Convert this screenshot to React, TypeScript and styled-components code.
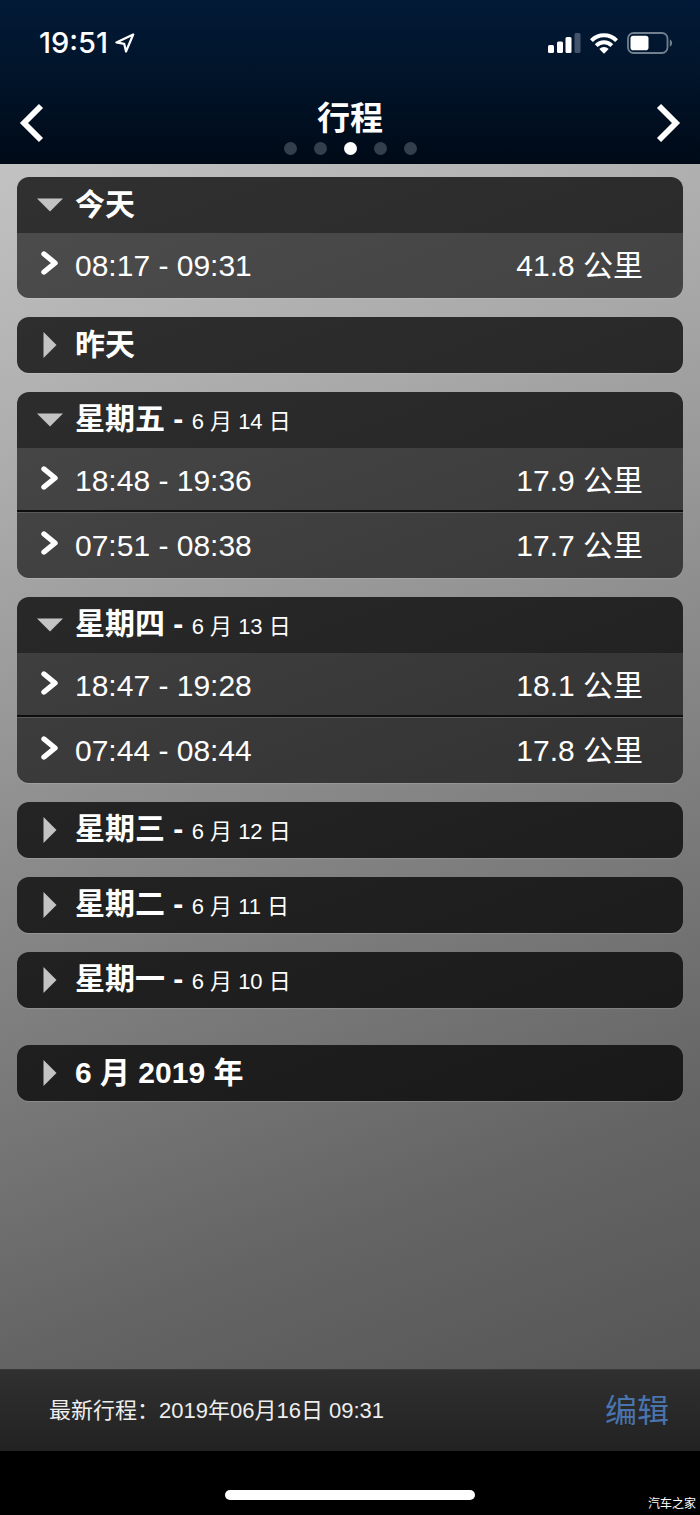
import React, { useState } from "react";
import styled, { createGlobalStyle, css } from "styled-components";

const GlobalStyle = createGlobalStyle`
  *, *::before, *::after { box-sizing: border-box; }
  html, body, #root { min-height: 100vh; }
  body {
    margin: 0;
    background: #000;
    color: #fff;
    font-family: "Liberation Sans", "Noto Sans CJK SC", sans-serif;
  }
  button { font: inherit; color: inherit; border: 0; background: none; padding: 0; cursor: pointer; }
`;

const Screen = styled.div`
  min-height: 100vh;
  display: flex;
  flex-direction: column;
`;

const TopBar = styled.header`
  height: 164px;
  flex: none;
  display: flex;
  flex-direction: column;
  background: linear-gradient(#021a37, #01142a 45%, #000a17);
`;

const StatusBar = styled.div`
  height: 86px;
  padding: 0 27px 0 39px;
  display: flex;
  align-items: center;
  justify-content: space-between;
`;

const Clock = styled.div`
  display: flex;
  align-items: center;
  gap: 7px;
  font: 500 29px/34px Inter, sans-serif;
`;

const StatusIcons = styled.div`
  display: flex;
  align-items: center;
  gap: 9px;
`;

const NavBar = styled.nav`
  flex: 1;
  padding: 0 18px;
  display: flex;
  align-items: flex-start;
  justify-content: space-between;
`;

const NavButton = styled.button`
  height: 74px;
  display: flex;
  align-items: center;
`;

const TitleBlock = styled.div`
  display: flex;
  flex-direction: column;
  align-items: center;
  gap: 3px;
  padding-top: 13px;
`;

const Title = styled.h1`
  margin: 0;
  font-size: 33px;
  line-height: 40px;
  font-weight: 700;
`;

const Dots = styled.div`
  display: flex;
  gap: 17px;
`;

const Dot = styled.span<{ $active?: boolean }>`
  width: 13px;
  height: 13px;
  border-radius: 50%;
  background: ${(p) => (p.$active ? "#fff" : "#343f4d")};
`;

const Trips = styled.main`
  flex: 1;
  padding: 13px 17px 18px;
  display: flex;
  flex-direction: column;
  gap: 19px;
  background: linear-gradient(160deg, #c2c2c2 0%, #a8a8a8 25%, #838383 55%, #646464 82%, #565656 100%);
`;

const Card = styled.section<{ $spaced?: boolean }>`
  flex: none;
  border-radius: 12px;
  overflow: hidden;
  box-shadow: 0 1px 1px rgba(255, 255, 255, 0.15);
  ${(p) => p.$spaced && css`margin-top: 18px;`}
`;

const CardHeading = styled.h2`
  margin: 0;
  font-size: 30px;
  font-weight: 700;
`;

const CardToggle = styled.button`
  width: 100%;
  height: 56px;
  padding-left: 20px;
  display: flex;
  align-items: center;
  background: rgba(0, 0, 0, 0.75);
  text-align: left;
`;

const Marker = styled.span`
  width: 38px;
  flex: none;
  display: flex;
`;

const HeadingText = styled.span`
  line-height: 40px;
  white-space: pre;
`;

const DateText = styled.span`
  font-size: 22px;
  font-weight: 400;
`;

const RowList = styled.ul`
  list-style: none;
  margin: 0;
  padding: 0;
`;

const RowItem = styled.li`
  background: rgba(0, 0, 0, 0.6);
  &:not(:last-child) {
    box-shadow: inset 0 -1px #5a5a5a, inset 0 -3px #0e0e0e;
  }
`;

const TripRow = styled.button`
  width: 100%;
  height: 65px;
  padding: 0 40px 0 20px;
  display: flex;
  align-items: center;
  font-size: 30px;
  line-height: 40px;
`;

const Distance = styled.span`
  margin-left: auto;
`;

const BottomBar = styled.footer`
  height: 82px;
  flex: none;
  padding: 0 31px 0 49px;
  display: flex;
  align-items: center;
  justify-content: space-between;
  background: linear-gradient(#303030, #222);
  border-top: 1px solid #3a3a3a;
`;

const Latest = styled.span`
  font-size: 22px;
  line-height: 32px;
  color: #eee;
`;

const EditButton = styled.button`
  && {
    font-size: 32px;
    line-height: 40px;
    color: #4a74ae;
  }
`;

const HomeArea = styled.div`
  position: relative;
  height: 64px;
  flex: none;
  display: flex;
  justify-content: center;
  align-items: flex-start;
  padding-top: 39px;
`;

const HomeIndicator = styled.div`
  width: 250px;
  height: 10px;
  border-radius: 5px;
  background: #fff;
`;

const Watermark = styled.span`
  position: absolute;
  right: 4px;
  bottom: 2px;
  font-size: 12px;
  line-height: 18px;
`;

const LocationIcon = () => (
  <svg width="20" height="20" viewBox="0 0 20 20" fill="none" stroke="#fff" strokeWidth="2.200" strokeLinejoin="round">
    <path d="M18.200 1.500 1.400 9.400 9.200 10.800 11 18.500Z" />
  </svg>
);

const SignalIcon = () => (
  <svg width="33" height="20" viewBox="0 0 33 20" fill="#fff">
    <rect x="0" y="12" width="6" height="8" rx="1.500" />
    <rect x="9" y="8.500" width="6" height="11.500" rx="1.500" />
    <rect x="17.500" y="4" width="6" height="16" rx="1.500" />
    <rect x="26.500" y="0" width="6" height="20" rx="1.500" fill="#42536a" />
  </svg>
);

const WifiIcon = () => (
  <svg width="28" height="21" viewBox="0 0 28 21">
    <g fill="none" stroke="#fff" strokeWidth="4">
      <path d="M1.400 7.600a17.600 17.600 0 0 1 25.200 0" />
      <path d="M6.200 12.600a11 11 0 0 1 15.600 0" />
    </g>
    <path d="M9.300 16a6.600 6.600 0 0 1 9.400 0L14 20.800Z" fill="#fff" />
  </svg>
);

const BatteryIcon = () => (
  <svg width="46" height="22" viewBox="0 0 46 22">
    <rect x="1" y="1" width="39.500" height="20" rx="5.500" fill="none" stroke="#71808f" strokeWidth="1.800" />
    <rect x="3.500" y="3.800" width="18" height="14.400" rx="2.800" fill="#fff" />
    <path d="M42.800 7.500c3 1 3 6 0 7Z" fill="#71808f" />
  </svg>
);

const NavChevron = ({ flip }: { flip?: boolean }) => (
  <svg width="26" height="40" viewBox="0 0 26 40" fill="none" stroke="#fff" strokeWidth="5.800">
    <path d={flip ? "M3 3 20 20 3 37" : "M23 3 6 20 23 37"} />
  </svg>
);

const Triangle = ({ open }: { open: boolean }) => (
  <svg width="26" height="26" viewBox="0 0 26 26">
    <path d={open ? "M0 6.500H26L13 19.500Z" : "M6.500 0V26L19.500 13Z"} fill="#c4c3c4" />
  </svg>
);

const RowChevron = () => (
  <svg width="26" height="30" viewBox="0 0 26 30" fill="none" stroke="#fff" strokeWidth="5.400" strokeLinecap="round" strokeLinejoin="round">
    <path d="M7 3 18 12 7 21" />
  </svg>
);

type Trip = { time: string; distance: string };
type Group = { title: string; date?: string; trips?: Trip[]; spaced?: boolean };

const groups: Group[] = [
  { title: "今天", trips: [{ time: "08:17 - 09:31", distance: "41.8 公里" }] },
  { title: "昨天" },
  {
    title: "星期五",
    date: "6 月 14 日",
    trips: [
      { time: "18:48 - 19:36", distance: "17.9 公里" },
      { time: "07:51 - 08:38", distance: "17.7 公里" },
    ],
  },
  {
    title: "星期四",
    date: "6 月 13 日",
    trips: [
      { time: "18:47 - 19:28", distance: "18.1 公里" },
      { time: "07:44 - 08:44", distance: "17.8 公里" },
    ],
  },
  { title: "星期三", date: "6 月 12 日" },
  { title: "星期二", date: "6 月 11 日" },
  { title: "星期一", date: "6 月 10 日" },
  { title: "6 月 2019 年", spaced: true },
];

const TripGroup = ({ group }: { group: Group }) => {
  const [open, setOpen] = useState(Boolean(group.trips));
  return (
    <Card $spaced={group.spaced}>
      <CardHeading>
        <CardToggle type="button" aria-expanded={open} onClick={() => setOpen(!open)}>
          <Marker>
            <Triangle open={open} />
          </Marker>
          <HeadingText>
            {group.title}
            {group.date && (
              <>
                {" - "}
                <DateText>{group.date}</DateText>
              </>
            )}
          </HeadingText>
        </CardToggle>
      </CardHeading>
      {open && group.trips && (
        <RowList>
          {group.trips.map((trip) => (
            <RowItem key={trip.time}>
              <TripRow type="button">
                <Marker>
                  <RowChevron />
                </Marker>
                <span>{trip.time}</span>
                <Distance>{trip.distance}</Distance>
              </TripRow>
            </RowItem>
          ))}
        </RowList>
      )}
    </Card>
  );
};

export default function App() {
  return (
    <Screen>
      <GlobalStyle />
      <TopBar>
        <StatusBar>
          <Clock>
            19:51
            <LocationIcon />
          </Clock>
          <StatusIcons>
            <SignalIcon />
            <WifiIcon />
            <BatteryIcon />
          </StatusIcons>
        </StatusBar>
        <NavBar>
          <NavButton type="button" aria-label="上一页">
            <NavChevron />
          </NavButton>
          <TitleBlock>
            <Title>行程</Title>
            <Dots>
              {[0, 1, 2, 3, 4].map((i) => (
                <Dot key={i} $active={i === 2} />
              ))}
            </Dots>
          </TitleBlock>
          <NavButton type="button" aria-label="下一页">
            <NavChevron flip />
          </NavButton>
        </NavBar>
      </TopBar>
      <Trips>
        {groups.map((group) => (
          <TripGroup key={group.title} group={group} />
        ))}
      </Trips>
      <BottomBar>
        <Latest>最新行程：2019年06月16日 09:31</Latest>
        <EditButton type="button">编辑</EditButton>
      </BottomBar>
      <HomeArea>
        <HomeIndicator />
        <Watermark>汽车之家</Watermark>
      </HomeArea>
    </Screen>
  );
}
